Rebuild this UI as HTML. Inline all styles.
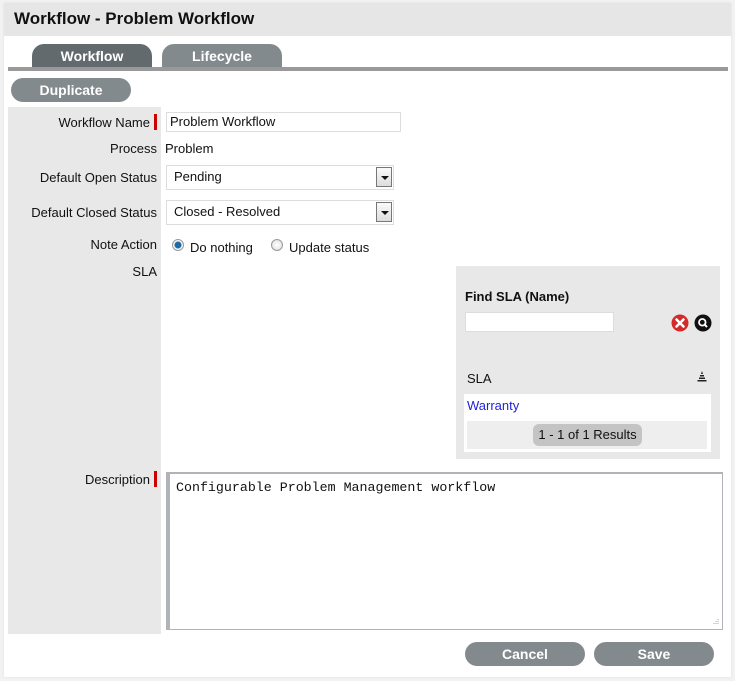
<!DOCTYPE html>
<html><head><meta charset="utf-8">
<style>
*{margin:0;padding:0;box-sizing:border-box}
body{width:735px;height:681px;background:#f2f2f2;font-family:"Liberation Sans",Arial,sans-serif;font-size:13px;color:#111;position:relative;overflow:hidden}
.a{position:absolute}
.panel{left:4px;top:3px;width:727px;height:674px;background:#fff;box-shadow:0 0 2px #ddd}
.hdr{left:4px;top:3px;width:727px;height:33px;background:#e6e6e6}
.title{left:14px;top:9px;font-size:17px;font-weight:bold;color:#111}
.tab{height:24px;border-radius:12px 12px 0 0;color:#fff;font-weight:bold;font-size:14px;text-align:center;line-height:24px}
.btn{background:#838a8e;color:#fff;font-weight:bold;font-size:14px;text-align:center;border-radius:12px;height:24px;line-height:24px}
.lab{right:578px;text-align:right;font-size:13px}
.req{width:3px;height:16px;background:#c00}
.inp{background:#fff;border:1px solid #ddd}
.sel{background:#fff;border:1px solid #ddd;font-size:13px;padding-left:7px;line-height:22px}
.dd{position:absolute;right:1px;top:1px;width:16px;height:20px;border:1px solid #777;background:linear-gradient(#fafafa,#ddd)}
.dd:after{content:"";position:absolute;left:4px;top:8px;border-left:4px solid transparent;border-right:4px solid transparent;border-top:4px solid #111}
.radio{width:12px;height:12px;border-radius:50%;border:1px solid #999;background:radial-gradient(#fff,#ddd)}
</style></head><body>
<div class="a panel"></div>
<div class="a hdr"></div>
<div class="a title">Workflow - Problem Workflow</div>
<div class="a tab" style="left:32px;top:44px;width:120px;background:#636a6e">Workflow</div>
<div class="a tab" style="left:162px;top:44px;width:120px;background:#838a8e">Lifecycle</div>
<div class="a" style="left:8px;top:67px;width:720px;height:4px;background:#999"></div>
<div class="a btn" style="left:11px;top:78px;width:120px">Duplicate</div>
<div class="a" style="left:8px;top:107px;width:153px;height:527px;background:#e8e8e8"></div>

<div class="a lab" style="top:115px;right:585px">Workflow Name</div>
<div class="a req" style="left:154px;top:114px"></div>
<div class="a inp" style="left:166px;top:112px;width:235px;height:20px;font-size:13px;padding-left:3px;line-height:18px">Problem Workflow</div>

<div class="a lab" style="top:141px">Process</div>
<div class="a" style="left:165px;top:141px;font-size:13px">Problem</div>

<div class="a lab" style="top:170px">Default Open Status</div>
<div class="a sel" style="left:166px;top:165px;width:228px;height:25px">Pending<div class="dd"></div></div>

<div class="a lab" style="top:205px">Default Closed Status</div>
<div class="a sel" style="left:166px;top:200px;width:228px;height:25px">Closed - Resolved<div class="dd"></div></div>

<div class="a lab" style="top:237px">Note Action</div>
<div class="a radio" style="left:172px;top:239px;background:radial-gradient(#1a6aa8 0 3px,#fff 4px,#ddd)"></div>
<div class="a" style="left:190px;top:240px;font-size:13px">Do nothing</div>
<div class="a radio" style="left:271px;top:239px"></div>
<div class="a" style="left:289px;top:240px;font-size:13px">Update status</div>

<div class="a lab" style="top:264px">SLA</div>

<div class="a" style="left:456px;top:266px;width:264px;height:193px;background:#e8e8e8"></div>
<div class="a" style="left:465px;top:289px;font-weight:bold;font-size:13px">Find SLA (Name)</div>
<div class="a inp" style="left:465px;top:312px;width:149px;height:20px"></div>
<svg class="a" style="left:671px;top:314px" width="18" height="18" viewBox="0 0 18 18"><circle cx="9" cy="9" r="8.5" fill="#d42a2a"/><path d="M5.5 5.5L12.5 12.5M12.5 5.5L5.5 12.5" stroke="#fff" stroke-width="2.6" stroke-linecap="round"/></svg>
<svg class="a" style="left:694px;top:314px" width="18" height="18" viewBox="0 0 18 18"><circle cx="9" cy="9" r="8.5" fill="#111"/><circle cx="8.3" cy="8.3" r="3.3" fill="none" stroke="#fff" stroke-width="1.8"/><path d="M10.6 10.6L13 13" stroke="#fff" stroke-width="2"/></svg>
<div class="a" style="left:467px;top:371px;font-size:13px">SLA</div>
<svg class="a" style="left:696px;top:371px" width="12" height="12" viewBox="0 0 12 12"><path d="M6 0L7 3H5z M4 4h4v1.5H4z M3 6.5h6V8H3z M1.5 9h9v1.5h-9z" fill="#222"/></svg>
<div class="a" style="left:464px;top:394px;width:247px;height:58px;background:#fff"></div>
<div class="a" style="left:467px;top:398px;color:#2222dd;font-size:13px">Warranty</div>
<div class="a" style="left:467px;top:421px;width:240px;height:28px;background:#eee"></div>
<div class="a" style="left:533px;top:424px;width:109px;height:22px;background:#c4c4c4;border-radius:6px;text-align:center;line-height:22px;font-size:13px">1 - 1 of 1 Results</div>

<div class="a lab" style="top:472px;right:585px">Description</div>
<div class="a req" style="left:154px;top:471px"></div>
<div class="a" style="left:166px;top:472px;width:557px;height:158px;border:1px solid #b0b4b8;border-left:4px solid #b0b4b8;border-top:2px solid #b0b4b8;background:#fff"></div>
<div class="a" style="left:176px;top:480px;font-family:'Liberation Mono','Courier New',monospace;font-size:13.3px">Configurable Problem Management workflow</div>
<svg class="a" style="left:711px;top:618px" width="8" height="8"><path d="M7 1v1M5 3v1M7 3v1M3 5v1M5 5v1M7 5v1" stroke="#aaa"/></svg>

<div class="a btn" style="left:465px;top:642px;width:120px">Cancel</div>
<div class="a btn" style="left:594px;top:642px;width:120px">Save</div>
</body></html>
